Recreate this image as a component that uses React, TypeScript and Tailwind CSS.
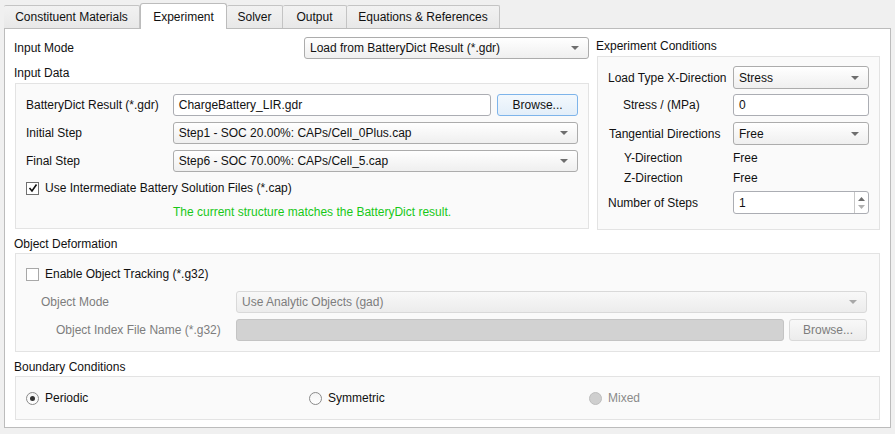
import React from "react";

const Arrow = ({ color = "#6e6e6e" }: { color?: string }) => (
  <svg width="8" height="4" viewBox="0 0 8 4">
    <path d="M0 0H8L4 4Z" fill={color} />
  </svg>
);

function Combo({ text, className = "", disabled = false }: { text: string; className?: string; disabled?: boolean }) {
  return (
    <div
      className={`flex items-center justify-between pl-[5px] pr-[9px] rounded-[3px] border ${
        disabled
          ? "border-[#d9d9d9] bg-gradient-to-b from-[#f8f8f8] to-[#ececec] text-[#7d7d7d]"
          : "border-[#acacac] bg-gradient-to-b from-white to-[#efefef] text-[#111]"
      } ${className}`}
    >
      <span className="whitespace-nowrap">{text}</span>
      <Arrow color={disabled ? "#a8a8a8" : "#6e6e6e"} />
    </div>
  );
}

function Input({ text = "", className = "", disabled = false }: { text?: string; className?: string; disabled?: boolean }) {
  return (
    <div
      className={`flex items-center pl-[5px] rounded-[3px] border ${
        disabled ? "border-[#c4c4c4] bg-[#d2d2d2]" : "border-[#abadb3] bg-white"
      } ${className}`}
    >
      <span className="whitespace-nowrap">{text}</span>
    </div>
  );
}

function Button({ text, className = "", disabled = false }: { text: string; className?: string; disabled?: boolean }) {
  return (
    <div
      className={`flex items-center justify-center rounded-[3px] border ${
        disabled
          ? "border-[#d9d9d9] bg-gradient-to-b from-[#f8f8f8] to-[#ececec] text-[#7d7d7d]"
          : "border-[#7eb4ea] bg-gradient-to-b from-[#f3f8fd] to-[#e3eef9] text-[#111]"
      } ${className}`}
    >
      {text}
    </div>
  );
}

function Checkbox({ checked, label }: { checked: boolean; label: string }) {
  return (
    <div className="flex items-center gap-[6px]">
      <div
        className={`w-[13px] h-[13px] flex items-center justify-center bg-white border ${
          checked ? "border-[#707070]" : "border-[#a8a8a8]"
        }`}
      >
        {checked && (
          <svg width="10" height="10" viewBox="0 0 10 10">
            <path d="M1.5 5 L4 8 L8.5 1.5" fill="none" stroke="#111" strokeWidth="1.6" />
          </svg>
        )}
      </div>
      <span className="text-[#111]">{label}</span>
    </div>
  );
}

function Radio({ checked = false, disabled = false, label }: { checked?: boolean; disabled?: boolean; label: string }) {
  return (
    <div className="flex items-center gap-[6px]">
      <div
        className={`w-[13px] h-[13px] rounded-full flex items-center justify-center border ${
          disabled ? "border-[#bdbdbd] bg-[#cfcfcf]" : "border-[#8a8a8a] bg-gradient-to-b from-[#f4f4f4] to-white"
        }`}
      >
        {checked && <div className="w-[5px] h-[5px] rounded-full bg-[#333]" />}
      </div>
      <span className={disabled ? "text-[#8a8a8a]" : "text-[#111]"}>{label}</span>
    </div>
  );
}

function Tab({ text, active = false, className = "" }: { text: string; active?: boolean; className?: string }) {
  return active ? (
    <div
      className={`h-[26px] -mb-px flex items-center justify-center bg-white border border-b-0 border-[#bcbcbc] rounded-t-[3px] relative z-10 ${className}`}
    >
      {text}
    </div>
  ) : (
    <div
      className={`h-[23px] flex items-center justify-center bg-gradient-to-b from-[#f2f2f2] to-[#e8e8e8] border border-b-0 border-l-0 border-[#c4c4c4] rounded-t-[2px] ${className}`}
    >
      {text}
    </div>
  );
}

export default function App() {
  return (
    <div className="w-[895px] h-[434px] bg-[#f0f0f0] font-['Liberation_Sans',Arial,sans-serif] text-[12px] text-[#111] leading-[16px] overflow-hidden">
      {/* Tabs */}
      <div className="flex items-end h-[28px] pl-[4px]">
        <Tab text="Constituent Materials" className="w-[136px] border-l" />
        <Tab text="Experiment" active className="w-[87px]" />
        <Tab text="Solver" className="w-[56px]" />
        <Tab text="Output" className="w-[64px]" />
        <Tab text="Equations & References" className="w-[153px]" />
      </div>

      {/* Panel */}
      <div className="mx-[4px] h-[400px] bg-white border border-[#bcbcbc] pl-[9px] pr-[10px] pt-[8px]">
        <div className="flex gap-[7px]">
          {/* Left column */}
          <div className="w-[575px] flex flex-col">
            <div className="flex items-center justify-between h-[22px]">
              <span>Input Mode</span>
              <Combo text="Load from BatteryDict Result (*.gdr)" className="w-[285px] h-[22px]" />
            </div>
            <div className="mt-[6px] h-[16px]">Input Data</div>
            <div className="mt-[2px] ml-px h-[146px] border border-[#e3e3e3] bg-[#fafafa] pl-[10px] pr-[10px] pt-[10px]">
              <div className="flex items-center h-[22px]">
                <span className="w-[147px]">BatteryDict Result (*.gdr)</span>
                <Input text="ChargeBattery_LIR.gdr" className="w-[319px] h-[22px]" />
                <Button text="Browse..." className="ml-[6px] w-[81px] h-[22px]" />
              </div>
              <div className="flex items-center h-[22px] mt-[6px]">
                <span className="w-[147px]">Initial Step</span>
                <Combo text="Step1 - SOC 20.00%: CAPs/Cell_0Plus.cap" className="w-[406px] h-[22px]" />
              </div>
              <div className="flex items-center h-[22px] mt-[6px]">
                <span className="w-[147px]">Final Step</span>
                <Combo text="Step6 - SOC 70.00%: CAPs/Cell_5.cap" className="w-[406px] h-[22px]" />
              </div>
              <div className="mt-[8px] h-[16px] flex items-center">
                <Checkbox checked label="Use Intermediate Battery Solution Files (*.cap)" />
              </div>
              <div className="mt-[8px] h-[16px] pl-[147px] text-[#18c818]">
                The current structure matches the BatteryDict result.
              </div>
            </div>
          </div>

          {/* Right column */}
          <div className="w-[285px] flex flex-col">
            <div className="h-[16px] mt-px">Experiment Conditions</div>
            <div className="mt-[2px] ml-px h-[174px] border border-[#e3e3e3] bg-[#fafafa] pl-[10px] pt-[9px]">
              <div className="flex items-center h-[23px]">
                <span className="w-[125px]">Load Type X-Direction</span>
                <Combo text="Stress" className="w-[136px] h-[23px]" />
              </div>
              <div className="flex items-center h-[22px] mt-[5px]">
                <span className="w-[125px] pl-[15px]">Stress / (MPa)</span>
                <Input text="0" className="w-[136px] h-[22px]" />
              </div>
              <div className="flex items-center h-[23px] mt-[6px]">
                <span className="w-[125px] pl-px">Tangential Directions</span>
                <Combo text="Free" className="w-[136px] h-[23px]" />
              </div>
              <div className="flex items-center h-[16px] mt-[5px]">
                <span className="w-[125px] pl-[16px]">Y-Direction</span>
                <span>Free</span>
              </div>
              <div className="flex items-center h-[16px] mt-[4px]">
                <span className="w-[125px] pl-[16px]">Z-Direction</span>
                <span>Free</span>
              </div>
              <div className="flex items-center h-[23px] mt-[5px]">
                <span className="w-[125px]">Number of Steps</span>
                <div className="w-[136px] h-[23px] flex rounded-[3px] border border-[#abadb3] bg-white">
                  <span className="flex-1 pl-[5px] flex items-center">1</span>
                  <div className="w-[14px] border-l border-[#c8c8c8] flex flex-col items-center justify-center gap-[4px]">
                    <svg width="7" height="4" viewBox="0 0 7 4">
                      <path d="M0 4H7L3.5 0Z" fill="#6e6e6e" />
                    </svg>
                    <svg width="7" height="4" viewBox="0 0 7 4">
                      <path d="M0 0H7L3.5 4Z" fill="#b0b0b0" />
                    </svg>
                  </div>
                </div>
              </div>
            </div>
          </div>
        </div>

        {/* Object Deformation */}
        <div className="mt-[6px] h-[16px]">Object Deformation</div>
        <div className="mt-[1px] ml-px h-[99px] border border-[#e3e3e3] bg-[#fafafa] pl-[10px] pr-[12px] pt-[12px]">
          <div className="h-[16px] flex items-center">
            <Checkbox checked={false} label="Enable Object Tracking (*.g32)" />
          </div>
          <div className="flex items-center h-[22px] mt-[9px] text-[#7d7d7d]">
            <span className="w-[210px] pl-[15px]">Object Mode</span>
            <Combo disabled text="Use Analytic Objects (gad)" className="flex-1 h-[22px]" />
          </div>
          <div className="flex items-center h-[22px] mt-[6px] text-[#7d7d7d]">
            <span className="w-[210px] pl-[30px]">Object Index File Name (*.g32)</span>
            <Input disabled className="w-[548px] h-[22px]" />
            <Button disabled text="Browse..." className="ml-[5px] flex-1 h-[22px]" />
          </div>
        </div>

        {/* Boundary Conditions */}
        <div className="mt-[7px] h-[16px]">Boundary Conditions</div>
        <div className="mt-[1px] ml-px h-[44px] border border-[#e3e3e3] bg-[#fafafa] pl-[10px] flex items-center">
          <div className="w-[283px]">
            <Radio checked label="Periodic" />
          </div>
          <div className="w-[280px]">
            <Radio label="Symmetric" />
          </div>
          <div>
            <Radio disabled label="Mixed" />
          </div>
        </div>
      </div>
    </div>
  );
}
